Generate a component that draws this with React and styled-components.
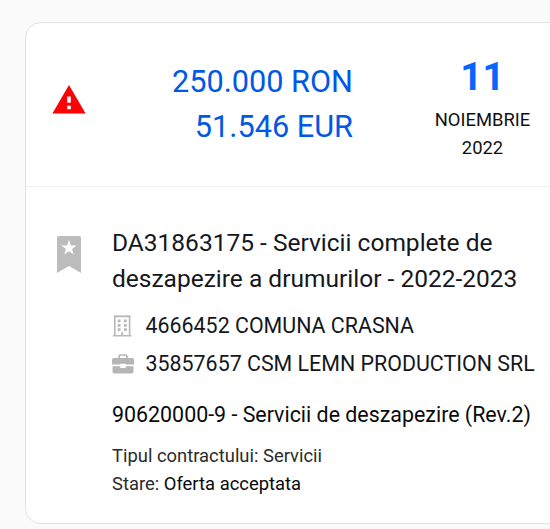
import styled, { createGlobalStyle } from "styled-components";

export default function App() {
	return (
		<>
			<GlobalStyle />
			<Page>
				<Card>
					<CardHeader>
						<WarningIcon />
						<Amounts>
							<p>250.000 RON</p>
							<p>51.546 EUR</p>
						</Amounts>
						<DateBox>
							<Day>11</Day>
							<p>NOIEMBRIE</p>
							<p>2022</p>
						</DateBox>
					</CardHeader>
					<CardBody>
						<BookmarkIcon />
						<Details>
							<Title>
								DA31863175 - Servicii complete de
								<br />
								deszapezire a drumurilor - 2022-2023
							</Title>
							<Company>
								<BuildingIcon />
								<p>4666452 COMUNA CRASNA</p>
							</Company>
							<Company>
								<BriefcaseIcon />
								<p>35857657 CSM LEMN PRODUCTION SRL</p>
							</Company>
							<Code>90620000-9 - Servicii de deszapezire (Rev.2)</Code>
							<Info>
								Tipul contractului: <span>Servicii</span>
							</Info>
							<Info>
								Stare: <strong>Oferta acceptata</strong>
							</Info>
						</Details>
					</CardBody>
				</Card>
			</Page>
		</>
	);
}

function WarningIcon() {
	return (
		<svg width="34" height="29" viewBox="0 0 34 29" fill="none">
			<path d="M17 0L33.6 28.6H0.4Z" fill="#fb0207" />
			<path d="M15.2 11.6h3.6v6.2h-3.6zM15.2 20.8h3.6v3.4h-3.6z" fill="#ffffff" />
		</svg>
	);
}

function BookmarkIcon() {
	return (
		<svg width="24" height="37" viewBox="0 0 24 37" fill="none">
			<path d="M2 0H22Q24 0 24 2V37L12 30L0 37V2Q0 0 2 0Z" fill="#bcbcbc" />
			<path
				d="M12 4L13.9 9.4L19.6 9.5L15.1 13L16.7 18.6L12 15.3L7.3 18.6L8.9 13L4.4 9.5L10.1 9.4Z"
				fill="#ffffff"
			/>
		</svg>
	);
}

function BuildingIcon() {
	return (
		<svg width="22" height="22" viewBox="0 0 22 22" fill="none">
			<path d="M2.8 20.5V1.5H17.6V20.5" stroke="#b8b8b8" strokeWidth="1.6" />
			<path d="M1.8 1.3H18.6M1 20.8H19.6" stroke="#b8b8b8" strokeWidth="1.6" />
			<path
				d="M5.7 4.5h2.8v2.8H5.7zM11.9 4.5h2.8v2.8h-2.8zM5.7 8.9h2.8v2.8H5.7zM11.9 8.9h2.8v2.8h-2.8zM5.7 13.3h2.8v2.8H5.7zM11.9 13.3h2.8v2.8h-2.8zM9.2 17.2h2v3.4h-2z"
				fill="#b8b8b8"
			/>
		</svg>
	);
}

function BriefcaseIcon() {
	return (
		<svg width="22" height="20" viewBox="0 0 22 20" fill="none">
			<path d="M7.1 4.5V2.3Q7.1 1 8.4 1H13.6Q14.9 1 14.9 2.3V4.5" stroke="#b5b5b5" strokeWidth="1.7" />
			<path
				d="M2 3.9H20Q22 3.9 22 5.9V10.6H13.7V9.7H8.3V10.6H0V5.9Q0 3.9 2 3.9ZM0.5 12.2H8.3V14H13.7V12.2H21.5V17.8Q21.5 19.6 19.7 19.6H2.3Q0.5 19.6 0.5 17.8Z"
				fill="#b5b5b5"
			/>
		</svg>
	);
}

const GlobalStyle = createGlobalStyle`
	* {
		box-sizing: border-box;
		margin: 0;
		padding: 0;
	}
	body {
		background-color: #fafafa;
		font-family: "Roboto", sans-serif;
		overflow: hidden;
	}
`;

const Page = styled.div`
	width: 550px;
	height: 529px;
	padding: 22px 0 0 25px;
	overflow: hidden;
`;

const Card = styled.div`
	width: 580px;
	height: 502px;
	background-color: #ffffff;
	border: 1px solid #e3e3e3;
	border-radius: 16px;
	color: #15171c;
	white-space: nowrap;
`;

const CardHeader = styled.div`
	height: 164px;
	display: flex;
	border-bottom: 1px solid #f0f0f0;
	> svg {
		flex-shrink: 0;
		margin: 62px 0 0 26px;
	}
`;

const Amounts = styled.div`
	width: 267px;
	flex-shrink: 0;
	padding-top: 36px;
	text-align: right;
	color: #0058e6;
	font-size: 30.7px;
	line-height: 45px;
`;

const DateBox = styled.div`
	width: 259px;
	flex-shrink: 0;
	padding-top: 31px;
	text-align: center;
	color: #111111;
	font-size: 18.4px;
	line-height: 28px;
`;

const Day = styled.p`
	margin-bottom: 6px;
	color: #0766fb;
	font-size: 38.6px;
	font-weight: 700;
	font-kerning: none;
	line-height: 46px;
`;

const CardBody = styled.div`
	display: flex;
	padding-top: 38px;
	> svg {
		flex-shrink: 0;
		margin: 11px 31px 0 31px;
	}
`;

const Details = styled.div`
	flex: 1;
`;

const Title = styled.h2`
	margin-bottom: 10px;
	font-size: 24.5px;
	font-weight: 400;
	line-height: 36px;
`;

const Company = styled.div`
	height: 38.3px;
	display: flex;
	align-items: center;
	gap: 11.5px;
	font-size: 21.4px;
	line-height: 38.3px;
`;

const Code = styled.p`
	margin: 17px 0 13px;
	color: #0a0a0a;
	font-size: 21.4px;
	line-height: 28px;
`;

const Info = styled.p`
	color: #2b2b2b;
	font-size: 18.4px;
	line-height: 28px;
	strong {
		color: #0a0a0a;
		font-weight: 400;
	}
`;
